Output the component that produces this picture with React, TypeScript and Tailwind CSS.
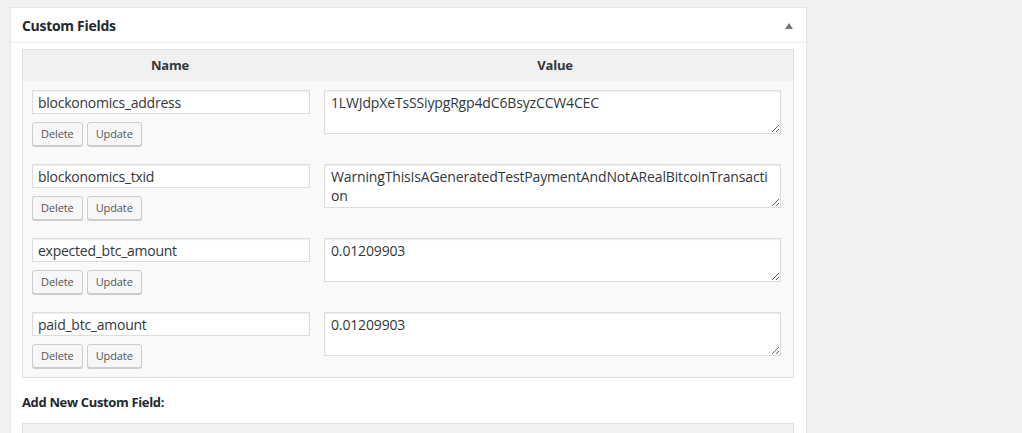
import React from 'react'

const fields = [
  { key: 'blockonomics_address', value: '1LWJdpXeTsSSiypgRgp4dC6BsyzCCW4CEC' },
  { key: 'blockonomics_txid', value: 'WarningThisIsAGeneratedTestPaymentAndNotARealBitcoinTransaction' },
  { key: 'expected_btc_amount', value: '0.01209903' },
  { key: 'paid_btc_amount', value: '0.01209903' },
]

function SmallButton({ children }: { children: React.ReactNode }) {
  return (
    <button className="h-[24px] rounded-[3px] border border-[#cccccc] bg-[#f7f7f7] px-[8px] text-[11px] leading-[22px] tracking-[-0.1px] text-[#555555] shadow-[0_1px_0_#cccccc]">
      {children}
    </button>
  )
}

function FieldRow({ name, value }: { name: string; value: string }) {
  return (
    <div className="flex py-[9px]">
      <div className="w-[294px] shrink-0 pl-[9px]">
        <input
          defaultValue={name}
          className="block h-[24px] w-[278px] border border-[#dddddd] bg-white px-[5px] text-[14px] tracking-[-0.25px] text-[#32373c] shadow-[inset_0_1px_2px_rgba(0,0,0,0.07)] outline-none"
        />
        <div className="mt-[8px] flex gap-[4px]">
          <SmallButton>Delete</SmallButton>
          <SmallButton>Update</SmallButton>
        </div>
      </div>
      <div className="pl-[7px]">
        <textarea
          defaultValue={value}
          rows={2}
          className="block h-[44px] w-[457px] resize-y break-all border border-[#dddddd] bg-white px-[6px] py-[2px] text-[14px] leading-[19px] tracking-[-0.15px] text-[#32373c] shadow-[inset_0_1px_2px_rgba(0,0,0,0.07)] outline-none"
        />
      </div>
    </div>
  )
}

export default function App() {
  return (
    <main className="h-[433px] overflow-hidden bg-[#f1f1f1] pl-[10px] pt-[7px] font-['Open_Sans',sans-serif] text-[#23282d]">
      <div className="w-[797px] border border-[#e5e5e5] bg-white shadow-[0_1px_1px_rgba(0,0,0,0.04)]">
        <div className="flex h-[35px] items-center justify-between border-b border-[#eeeeee] pl-[11px] pr-[13px]">
          <h2 className="text-[14px] font-bold tracking-[-0.3px]">Custom Fields</h2>
          <svg width="8" height="6" viewBox="0 0 8 6" className="mt-[2px]">
            <path d="M0 6 L4 0 L8 6 Z" fill="#72777c" />
          </svg>
        </div>
        <div className="pl-[11px] pt-[6px]">
          <div className="w-[772px] border border-[#e1e1e1] bg-[#f9f9f9]">
            <div className="flex h-[31px] items-center bg-[#f1f1f1] text-[13px] font-bold tracking-[-0.2px] text-[#32373c]">
              <div className="w-[294px] text-center">Name</div>
              <div className="flex-1 text-center">Value</div>
            </div>
            {fields.map((f) => (
              <FieldRow key={f.key} name={f.key} value={f.value} />
            ))}
          </div>
          <p className="pb-[10px] pt-[15px] text-[13px] font-bold tracking-[-0.35px]">Add New Custom Field:</p>
          <div className="h-[20px] w-[772px] border border-[#e1e1e1] bg-[#f1f1f1]" />
        </div>
      </div>
    </main>
  )
}
